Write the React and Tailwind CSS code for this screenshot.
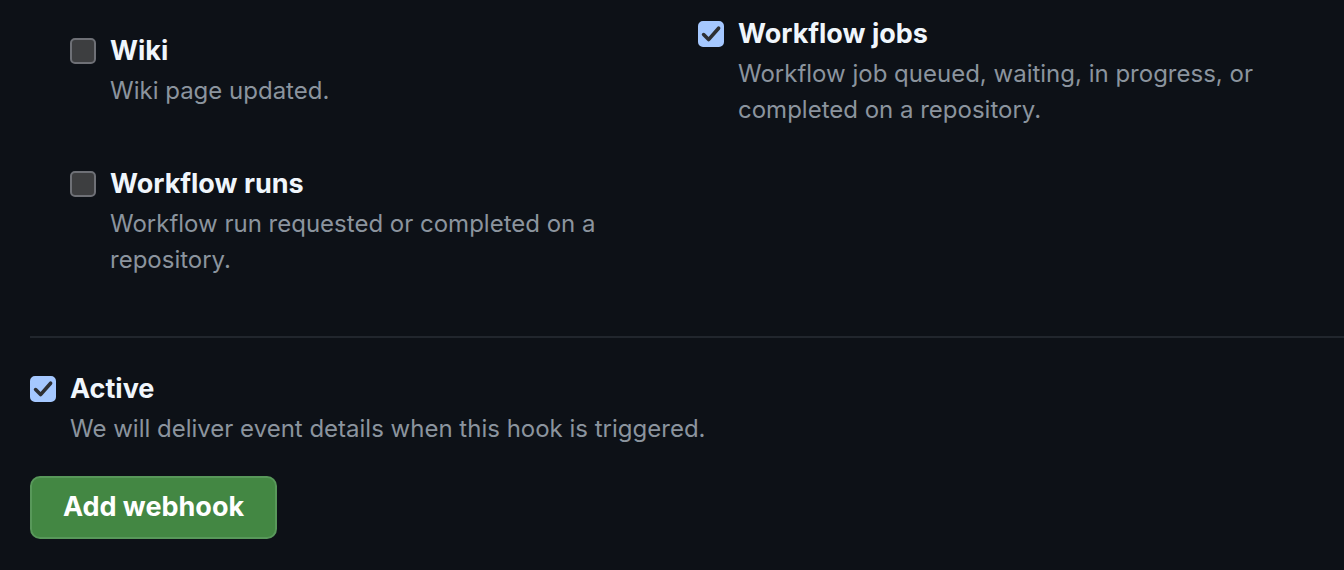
import { useState } from 'react'

const LEFT = [
  { id: 'wiki', title: 'Wiki', lines: ['Wiki page updated.'], checked: false },
  { id: 'runs', title: 'Workflow runs', lines: ['Workflow run requested or completed on a', 'repository.'], checked: false },
]
const RIGHT = [
  { id: 'jobs', title: 'Workflow jobs', lines: ['Workflow job queued, waiting, in progress, or', 'completed on a repository.'], checked: true },
]

function Box({ checked, onClick }) {
  return (
    <button type="button" onClick={onClick}
      className={'w-[26px] h-[26px] rounded-[5px] flex items-center justify-center shrink-0 border-2 ' +
        (checked ? 'bg-[#a5c8ff] border-[#a5c8ff]' : 'bg-[#3d3e40] border-[#6e7076]')}>
      {checked && (
        <svg width="22" height="22" viewBox="0 0 22 22">
          <path d="M3.6 11.6 L8.6 16.6 L18.6 5.2" fill="none" stroke="#2d2f33" strokeWidth="3.6" strokeLinecap="round" strokeLinejoin="round" />
        </svg>
      )}
    </button>
  )
}

function Item({ item, value, toggle }) {
  return (
    <div>
      <div className="flex items-center gap-[14px] h-[36px]">
        <Box checked={value} onClick={toggle} />
        <span className="text-[27px] font-bold text-[#f0f6fc] leading-[36px]">{item.title}</span>
      </div>
      <p className="mt-[4px] pl-[40px] text-[24px] leading-[36px] text-[#8b949e]">
        {item.lines.map((l, i) => <span key={i}>{l}{i < item.lines.length - 1 && <br />}</span>)}
      </p>
    </div>
  )
}

export default function App() {
  const [state, setState] = useState({ wiki: false, runs: false, jobs: true, active: true })
  const toggle = k => () => setState(s => ({ ...s, [k]: !s[k] }))

  return (
    <div className="w-[1344px] h-[570px] overflow-hidden bg-[#0d1117] pl-[30px]" style={{ fontFamily: 'Inter, "Liberation Sans", Arial, sans-serif' }}>
      <div className="grid grid-cols-[628px_1fr] pl-[40px]">
        <div className="pt-[33px] flex flex-col gap-[57px]">
          {LEFT.map(it => <Item key={it.id} item={it} value={state[it.id]} toggle={toggle(it.id)} />)}
        </div>
        <div className="pt-[16px]">
          {RIGHT.map(it => <Item key={it.id} item={it} value={state[it.id]} toggle={toggle(it.id)} />)}
        </div>
      </div>

      <div className="mt-[58px] border-t-2 border-[#21262d]" />

      <div className="pt-[33px]">
        <div className="flex items-center gap-[14px] h-[36px]">
          <Box checked={state.active} onClick={toggle('active')} />
          <span className="text-[27px] font-bold text-[#f0f6fc]">Active</span>
        </div>
        <p className="mt-[4px] pl-[40px] text-[24px] leading-[36px] text-[#8b949e]">We will deliver event details when this hook is triggered.</p>
      </div>

      <button type="button" className="mt-[29px] w-[247px] h-[63px] rounded-[10px] bg-[#438743] border-2 border-[#58985a] text-white text-[27px] font-bold">
        Add webhook
      </button>
    </div>
  )
}
